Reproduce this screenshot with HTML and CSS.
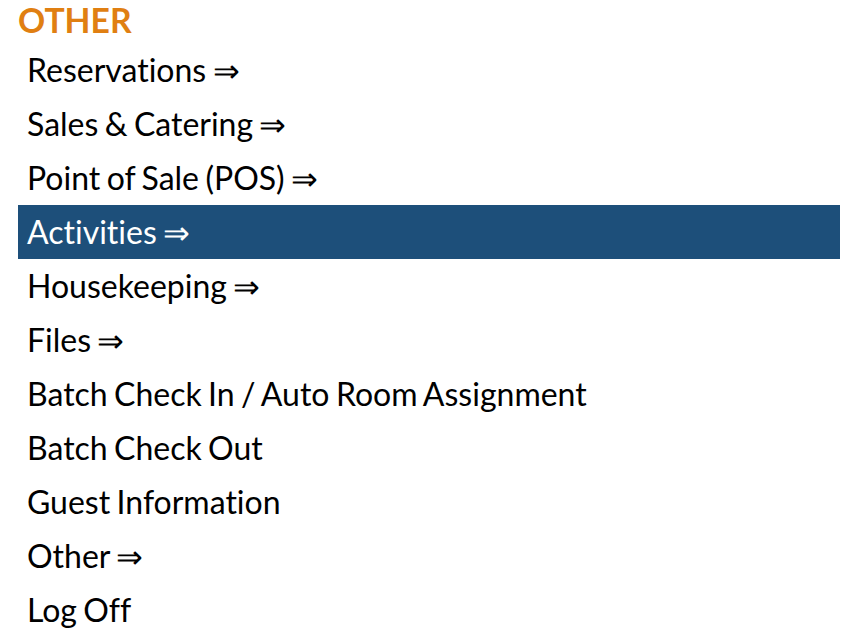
FILE: index.html
```html
<!DOCTYPE html>
<html>
<head>
<meta charset="utf-8">
<link rel="stylesheet" href="styles.css">
</head>
<body>
<div class="menu">
  <h2 class="menu-title">OTHER</h2>
  <ul class="menu-list">
    <li class="menu-item">Reservations &rArr;</li>
    <li class="menu-item">Sales &amp; Catering &rArr;</li>
    <li class="menu-item">Point of Sale (POS) &rArr;</li>
    <li class="menu-item active">Activities &rArr;</li>
    <li class="menu-item">Housekeeping &rArr;</li>
    <li class="menu-item">Files &rArr;</li>
    <li class="menu-item">Batch Check In / Auto Room Assignment</li>
    <li class="menu-item">Batch Check Out</li>
    <li class="menu-item">Guest Information</li>
    <li class="menu-item">Other &rArr;</li>
    <li class="menu-item">Log Off</li>
  </ul>
</div>
</body>
</html>
```
FILE: styles.css
```css
html, body {
  margin: 0;
  padding: 0;
  background: #ffffff;
}
body {
  font-family: Lato, "Open Sans", sans-serif;
  font-variant-ligatures: none;
  overflow: hidden;
}
.menu {
  padding: 0 3px 0 18px;
}
.menu-title {
  margin: 0;
  height: 43px;
  font-size: 33.7px;
  font-weight: 700;
  color: #e07f12;
  line-height: 40px;
}
.menu-list {
  list-style: none;
  margin: 0;
  padding: 0;
}
.menu-item {
  height: 54px;
  line-height: 54px;
  padding-left: 9px;
  font-size: 32px;
  word-spacing: -1.8px;
  color: #000000;
  white-space: nowrap;
}
.menu-item.active {
  background: #1d4f7a;
  color: #ffffff;
}
```
